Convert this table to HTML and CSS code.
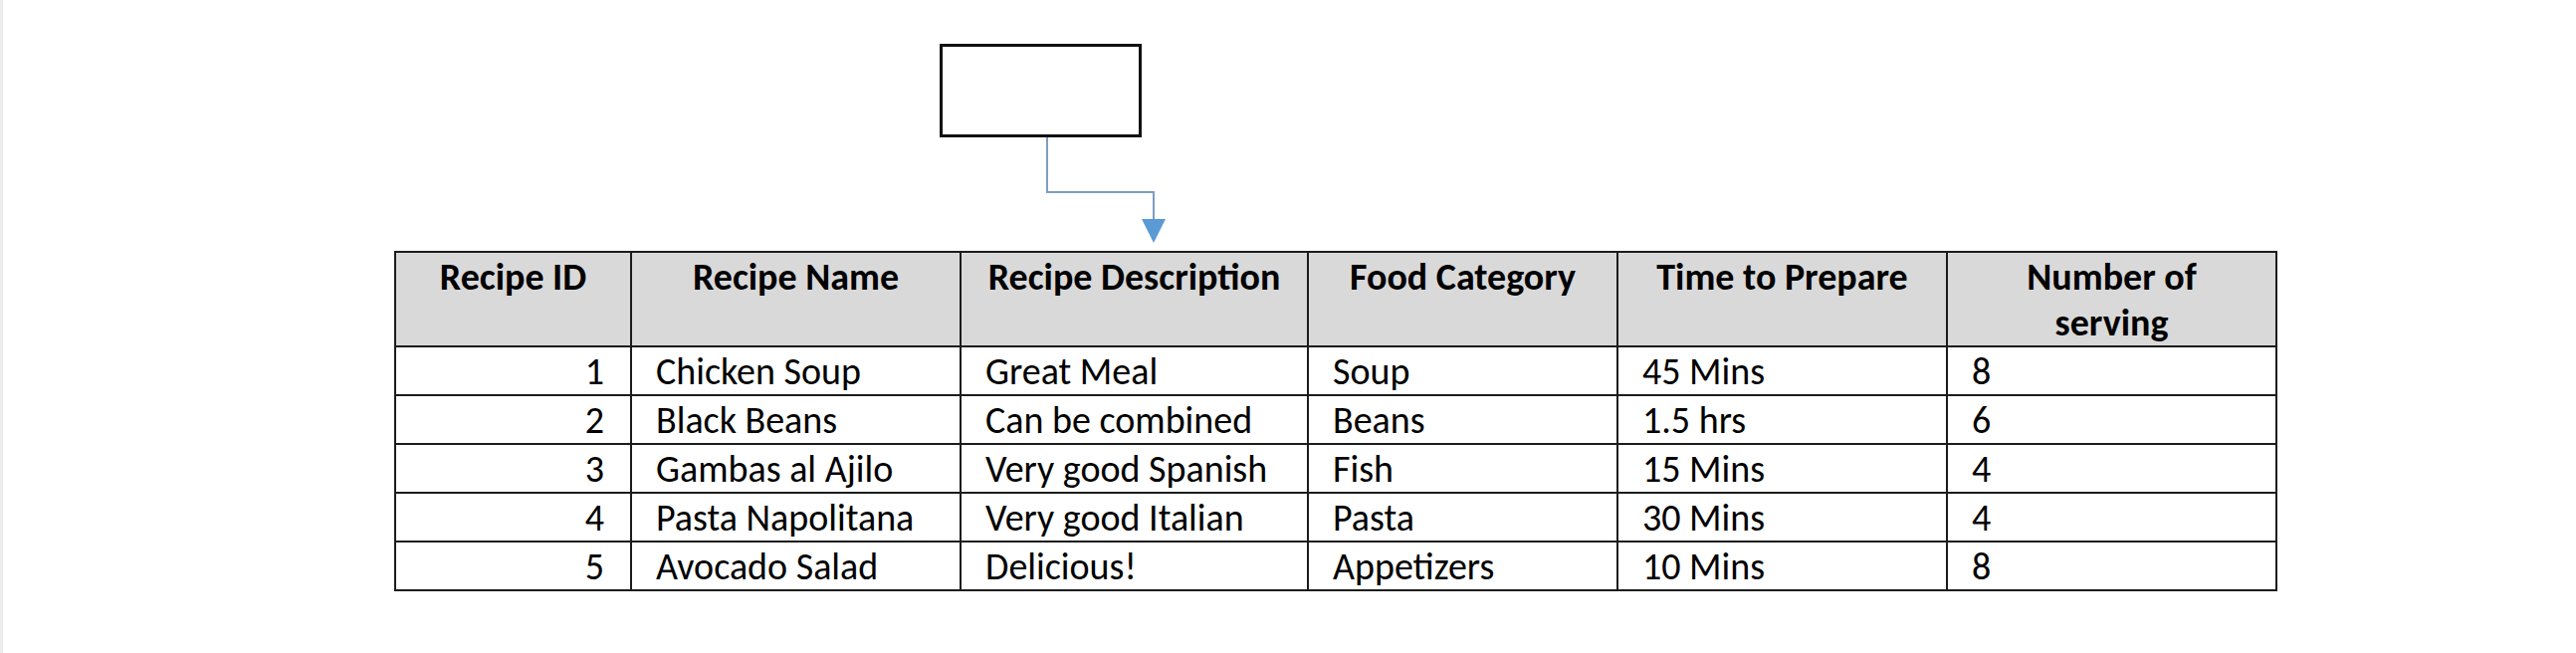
FILE: index.html
```html
<!DOCTYPE html>
<html lang="en">
<head>
<meta charset="utf-8">
<title>Recipes</title>
<link rel="stylesheet" href="styles.css">
</head>
<body>
<div class="page">
  <div class="diagram">
    <div class="node"></div>
    <svg class="connector" width="140" height="120" viewBox="0 0 140 120">
      <polyline points="9,0 9,55 116,55 116,84" fill="none" stroke="#7f9cc4" stroke-width="2"/>
      <polygon points="104,82 128,82 116,106" fill="#5b9bd5"/>
    </svg>
  </div>
  <table class="recipes">
    <colgroup>
      <col class="c-id">
      <col class="c-name">
      <col class="c-desc">
      <col class="c-cat">
      <col class="c-time">
      <col class="c-serv">
    </colgroup>
    <thead>
      <tr>
        <th>Recipe ID</th>
        <th>Recipe Name</th>
        <th>Recipe Description</th>
        <th>Food Category</th>
        <th>Time to Prepare</th>
        <th>Number of<br>serving</th>
      </tr>
    </thead>
    <tbody>
      <tr><td class="num">1</td><td>Chicken Soup</td><td>Great Meal</td><td>Soup</td><td>45 Mins</td><td>8</td></tr>
      <tr><td class="num">2</td><td>Black Beans</td><td>Can be combined</td><td>Beans</td><td>1.5 hrs</td><td>6</td></tr>
      <tr><td class="num">3</td><td>Gambas al Ajilo</td><td>Very good Spanish</td><td>Fish</td><td>15 Mins</td><td>4</td></tr>
      <tr><td class="num">4</td><td>Pasta Napolitana</td><td>Very good Italian</td><td>Pasta</td><td>30 Mins</td><td>4</td></tr>
      <tr><td class="num">5</td><td>Avocado Salad</td><td>Delicious!</td><td>Appetizers</td><td>10 Mins</td><td>8</td></tr>
    </tbody>
  </table>
</div>
</body>
</html>
```
FILE: styles.css
```css
html, body {
  margin: 0;
  padding: 0;
  background: #ffffff;
}
body {
  width: 2588px;
  height: 656px;
  overflow: hidden;
  font-family: Carlito, Calibri, Lato, "Liberation Sans", sans-serif;
  color: #000;
  border-left: 3px solid #ececec;
  box-sizing: border-box;
}
.page {
  padding-top: 44px;
}
.diagram {
  position: relative;
  height: 208px;
  margin-left: 941px;
}
.node {
  position: absolute;
  left: 0;
  top: 0;
  width: 197px;
  height: 88px;
  border: 3px solid #111;
  background: #fff;
}
.connector {
  position: absolute;
  left: 99px;
  top: 94px;
}
.recipes {
  margin-left: 393px;
  border-collapse: collapse;
  table-layout: fixed;
  width: 1891px;
  font-size: 38px;
}
.c-id { width: 237px; }
.c-name { width: 331px; }
.c-desc { width: 349px; }
.c-cat { width: 311px; }
.c-time { width: 331px; }
.c-serv { width: 331px; }
.recipes th,
.recipes td {
  border: 2px solid #1c1c1c;
  padding: 0 24px;
  white-space: nowrap;
}
.recipes th {
  background: #d9d9d9;
  font-weight: bold;
  text-align: center;
  vertical-align: top;
  height: 91px;
  line-height: 46px;
  padding-top: 1px;
  padding-bottom: 0;
  box-sizing: border-box;
}
.recipes td {
  height: 46.8px;
  line-height: 46px;
  text-align: left;
  vertical-align: top;
  padding-top: 1px;
  padding-bottom: 0;
  box-sizing: border-box;
}
.recipes td.num {
  text-align: right;
  padding-right: 26px;
}
```
